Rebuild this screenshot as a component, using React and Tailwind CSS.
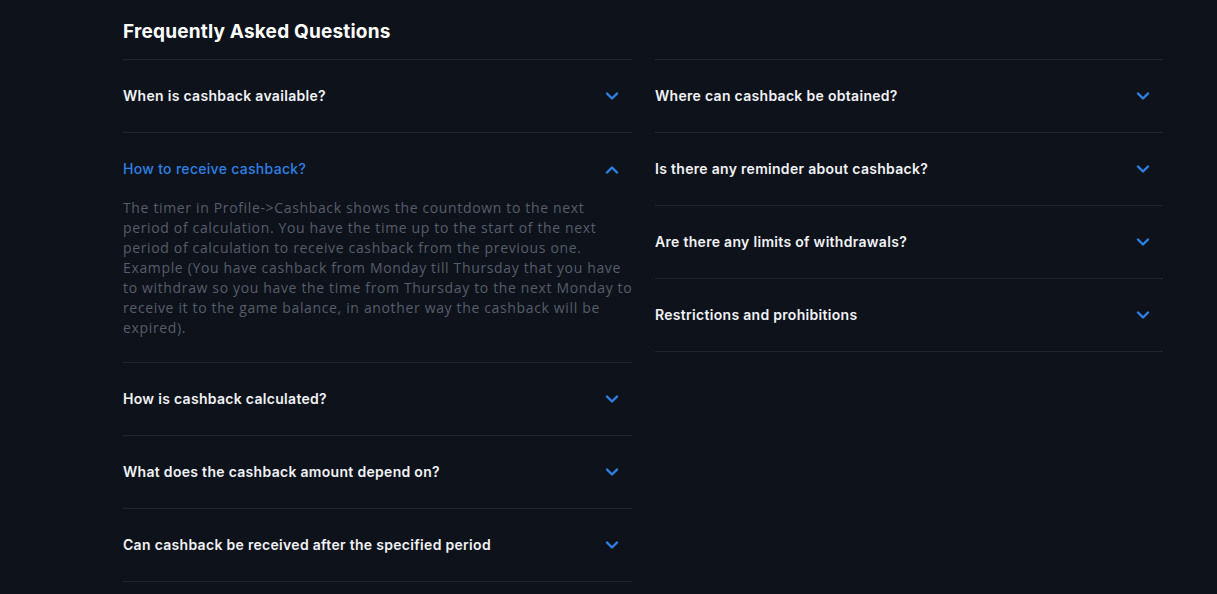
import React from "react";

const left = [
  { q: "When is cashback available?" },
  {
    q: "How to receive cashback?",
    open: true,
    a: [
      "The timer in Profile->Cashback shows the countdown to the next",
      "period of calculation. You have the time up to the start of the next",
      "period of calculation to receive cashback from the previous one.",
      "Example (You have cashback from Monday till Thursday that you have",
      "to withdraw so you have the time from Thursday to the next Monday to",
      "receive it to the game balance, in another way the cashback will be",
      "expired).",
    ],
  },
  { q: "How is cashback calculated?" },
  { q: "What does the cashback amount depend on?" },
  { q: "Can cashback be received after the specified period" },
];

const right = [
  { q: "Where can cashback be obtained?" },
  { q: "Is there any reminder about cashback?" },
  { q: "Are there any limits of withdrawals?" },
  { q: "Restrictions and prohibitions" },
];

function Chevron({ up }) {
  return (
    <svg width="14" height="9" viewBox="0 0 14 9" fill="none" className="shrink-0 mr-[13px]">
      <path
        d={up ? "M2 7.5L7 2.5L12 7.5" : "M2 1.5L7 6.5L12 1.5"}
        stroke="#2f80e4"
        strokeWidth="2.4"
        strokeLinecap="round"
        strokeLinejoin="round"
      />
    </svg>
  );
}

function Item({ q, a, open }) {
  return (
    <div className="border-b border-[#1e232d]">
      <div
        className={
          "flex items-center justify-between " + (open ? "pt-6 pb-[17px]" : "py-6")
        }
      >
        <span
          className={
            "text-[14px] leading-6 tracking-[0.3px] " +
            (open ? "text-[#2f80e4] font-medium" : "text-[#f1f3f6] font-semibold")
          }
        >
          {q}
        </span>
        <Chevron up={open} />
      </div>
      {open && (
        <div
          className="pb-6 text-[14px] leading-5 text-[#575d6a] tracking-[0.65px] whitespace-nowrap"
          style={{ fontFamily: "'Open Sans', sans-serif" }}
        >
          {a.map((l, i) => (
            <div key={i}>{l}</div>
          ))}
        </div>
      )}
    </div>
  );
}

export default function App() {
  return (
    <div
      className="min-h-[594px] w-full bg-[#0e121b] pl-[123px] pr-[54px] pt-[20px]"
      style={{ fontFamily: "Inter, 'Noto Sans', sans-serif", fontFeatureSettings: "'calt' 0" }}
    >
      <h2 className="text-[19px] leading-6 font-bold text-white tracking-[0.2px]">
        Frequently Asked Questions
      </h2>
      <div className="mt-[15px] grid grid-cols-[509px_508px] gap-x-[23px] items-start">
        <div className="border-t border-[#1e232d]">
          {left.map((it, i) => (
            <Item key={i} {...it} />
          ))}
        </div>
        <div className="border-t border-[#1e232d]">
          {right.map((it, i) => (
            <Item key={i} {...it} />
          ))}
        </div>
      </div>
    </div>
  );
}
